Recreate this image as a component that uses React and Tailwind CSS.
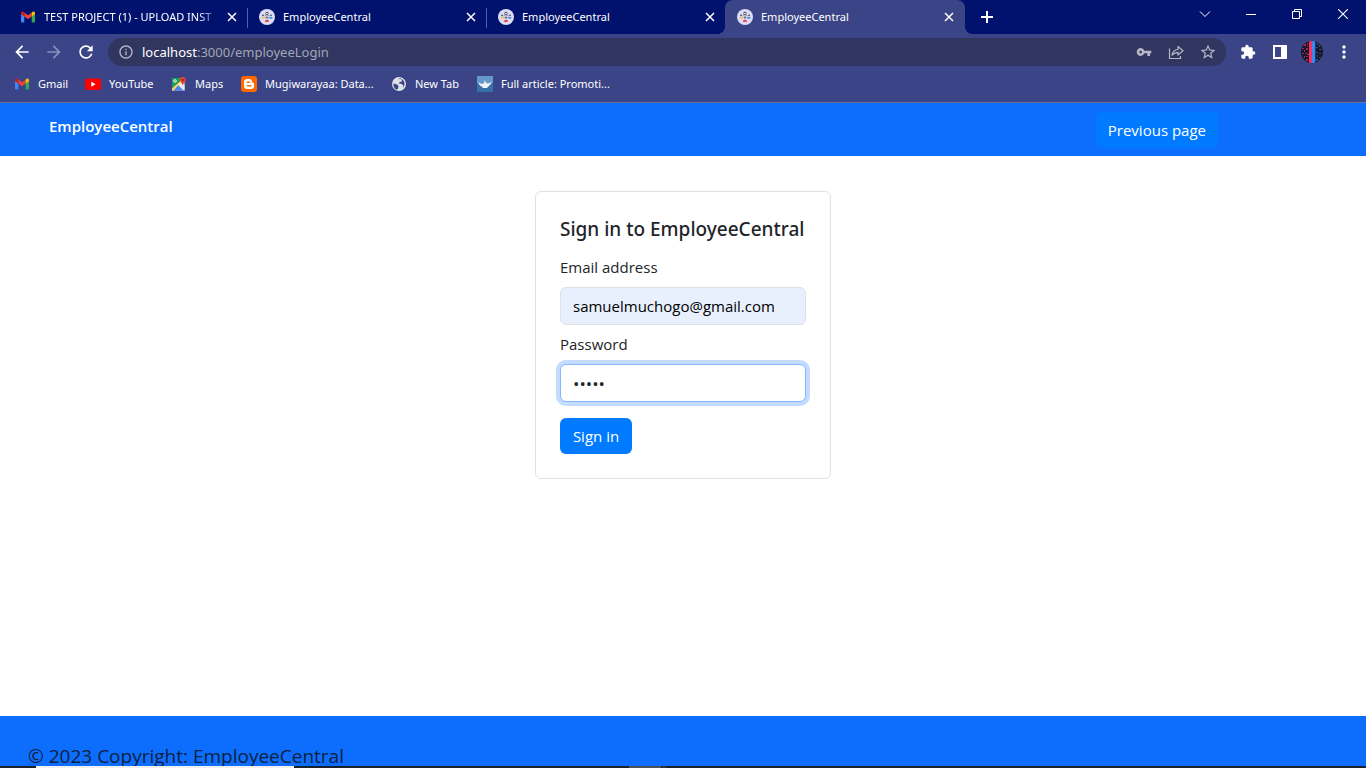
import React from "react";
import {
  MdArrowBack,
  MdArrowForward,
  MdRefresh,
  MdInfoOutline,
  MdVpnKey,
  MdStarBorder,
  MdExtension,
  MdMoreVert,
} from "react-icons/md";

function GmailIcon() {
  return (
    <svg viewBox="0 0 16 16" className="size-4 shrink-0" aria-hidden="true">
      <path d="M1 4.500 4.300 7v6.500H2a1 1 0 0 1-1-1z" fill="#4285f4" />
      <path d="M15 4.500 11.700 7v6.500H14a1 1 0 0 0 1-1z" fill="#34a853" />
      <path d="M4.300 3.500 8 6.300l3.700-2.800v4L8 10.300 4.300 7.500z" fill="#ea4335" />
      <path d="M1 4.300c0-1.800 1.800-2.300 3.300-.9v4.100L1 5.200z" fill="#c5221f" />
      <path d="M15 4.300c0-1.800-1.800-2.300-3.300-.9v4.100L15 5.200z" fill="#fbbc04" />
    </svg>
  );
}

function PeopleIcon() {
  return (
    <svg viewBox="0 0 16 16" className="size-4 shrink-0" aria-hidden="true">
      <circle cx="8" cy="8" r="8" fill="#dcdcf6" />
      <circle cx="8" cy="4.500" r="1.300" fill="#fff" stroke="#454a5c" strokeWidth="1" />
      <circle cx="4" cy="6.300" r=".9" fill="#454a5c" />
      <circle cx="12" cy="6.300" r=".9" fill="#454a5c" />
      <path d="M5.500 7 6.700 6.300M10.500 7 9.300 6.300M8 6.500V10M6.500 8.500h3" stroke="#6a6f80" strokeWidth=".9" />
      <path d="M2.700 8h3v1.800h-3z" fill="#f5c069" />
      <path d="M10.300 8h3v1.800h-3z" fill="#4793d8" />
      <path d="M6.700 10.800h2.600l.9 2.200H5.800z" fill="#e84c4c" />
    </svg>
  );
}

function YouTubeIcon() {
  return (
    <svg viewBox="0 0 16 16" className="size-4 shrink-0" aria-hidden="true">
      <rect x="0" y="2.500" width="16" height="11.500" rx="2.500" fill="#f00" />
      <path d="M6.300 5.800v5l4.300-2.500z" fill="#fff" />
    </svg>
  );
}

function MapsIcon() {
  return (
    <svg viewBox="0 0 16 16" className="size-4 shrink-0" aria-hidden="true">
      <path d="M1 2h12.500v12.500H1z" fill="#e8eaed" />
      <path d="M1 2h9l-1 5-8 7.500z" fill="#1e9e58" />
      <path d="M1 12.500 11 3.500l1.500 1.500L3 14.500H1z" fill="#fdd663" />
      <path d="m7.500 8.500 3-2.500 3 3v5.500z" fill="#e8eaed" />
      <path d="M2.500 14.500 7.300 9.300l5.200 5.200z" fill="#4285f4" />
      <circle cx="4" cy="5" r="1.300" fill="none" stroke="#fff" strokeWidth=".9" />
      <path d="M11.800 1a2.900 2.900 0 0 0-2.900 2.900c0 2.300 2.300 2.800 2.900 5.600.6-2.800 2.900-3.300 2.900-5.600A2.900 2.900 0 0 0 11.800 1z" fill="#ea4335" />
      <circle cx="11.800" cy="3.900" r="1" fill="#8c1d18" />
    </svg>
  );
}

function BloggerIcon() {
  return (
    <svg viewBox="0 0 16 16" className="size-4 shrink-0" aria-hidden="true">
      <rect width="16" height="16" rx="3" fill="#ff6a00" />
      <path d="M6 3h2.500A2.600 2.600 0 0 1 11 5.600c0 1 .4 1.100 1.200 1.200.5 0 .8.300.8.800V10a3 3 0 0 1-3 3H6a3 3 0 0 1-3-3V6a3 3 0 0 1 3-3z" fill="#fff" />
      <path d="M6.300 6.200h2M6.300 9.800h3.500" stroke="#ff6a00" strokeWidth="1.400" strokeLinecap="round" />
    </svg>
  );
}

function GlobeIcon() {
  return (
    <svg viewBox="0 0 16 16" className="size-4 shrink-0" aria-hidden="true">
      <circle cx="8" cy="8" r="7" fill="#dfe1e8" />
      <path d="M2.500 7.500 6 8.500l1.500 1.500-.5 2.500-1 1.300C3.500 13 2.200 10.500 2.500 7.500zM7 3.500l2-.8 2 1-.5 2L8.500 6 8 7.500 11 8l1.500 2-1 2c2-1.500 2.500-4.500 1.500-6.500l-1.500-2L9 2z" fill="#3b4487" />
    </svg>
  );
}

function LampIcon() {
  return (
    <svg viewBox="0 0 16 16" className="size-4 shrink-0" aria-hidden="true">
      <path d="M0 0h16v16H0z" fill="#3670a8" />
      <path d="M0 0h16v7H0z" fill="#6299c8" />
      <path d="M1 6.500 4 7.500h2.500L7.500 6V4.800h1V6l1.200 1.300h2.300c.8-1.200 2.500-1 3-.2-1.500.2-2 3.500-5 4l1 .9H5l1-.9C3.500 10.500 2 8.800 1 6.500z" fill="#edf3f8" />
    </svg>
  );
}

function CloseIcon() {
  return (
    <svg viewBox="0 0 16 16" className="size-4" fill="none" stroke="#fff" strokeWidth="1.500" aria-hidden="true">
      <path d="m4 4 8 8M12 4l-8 8" />
    </svg>
  );
}

function ShareIcon() {
  return (
    <svg viewBox="0 0 16 16" className="size-4" fill="none" stroke="#b5b7c6" strokeWidth="1.200" aria-hidden="true">
      <path d="M1.500 4.500v10h11V12" />
      <path d="M4 11c.5-3.500 2.500-5.300 6-5.500V2.500l5 4.300-5 4.200V8.300C7.500 8.300 5.700 9.200 4 11z" strokeLinejoin="round" />
    </svg>
  );
}

function Avatar() {
  return (
    <svg viewBox="0 0 22 22" className="size-[22px]" aria-hidden="true">
      <defs>
        <clipPath id="avatar-clip">
          <circle cx="11" cy="11" r="11" />
        </clipPath>
      </defs>
      <g clipPath="url(#avatar-clip)">
        <path d="M0 0h22v22H0z" fill="#17182b" />
        <path d="M8 0h3v22H8z" fill="#f5316a" />
        <path d="M11 0h3.300v22H11z" fill="#3a86f5" />
        <path d="M3 3h2v2H3zM1 7h2v1H1zM5 7h2v2H5zM3 9h1v2H3zM1 12h2v1H1zM4 12h2v1H4zM3 15h1v2H3zM5 15h2v1H5zM5 18h2v2H5zM6 2h1v2H6zM6 5h1v1H6z" fill="#a3264f" />
        <path d="M16 2h1v2h-1zM18 4h1v2h-1zM15 6h2v1h-2zM18 8h3v1h-3zM15 11h2v1h-2zM18 12h2v1h-2zM16 14h1v2h-1zM18 16h2v1h-2zM15 18h2v2h-2z" fill="#294f8d" />
        <path d="M6 12.500c0 3 5 1 11-3-5 3-8.500 4.500-9.300 3.500z" fill="#d63a86" />
      </g>
    </svg>
  );
}

function Tab({ icon, title, active = false, fade = false, divider = false }) {
  return (
    <div
      className={
        active
          ? "relative flex h-full w-[240px] items-center rounded-t-lg bg-[#3b4487] pl-3 pr-2"
          : "relative flex h-full w-[239px] items-center pl-3 pr-[7px]"
      }
    >
      {active && (
        <>
          <span className="absolute bottom-0 -left-2 size-2 bg-[radial-gradient(circle_at_top_left,#00126e_8px,#3b4487_8px)]" />
          <span className="absolute bottom-0 -right-2 size-2 bg-[radial-gradient(circle_at_top_right,#00126e_8px,#3b4487_8px)]" />
        </>
      )}
      {icon}
      <span
        className={
          fade
            ? "ml-2 min-w-0 flex-1 overflow-hidden whitespace-nowrap [mask-image:linear-gradient(to_right,black_88%,transparent)]"
            : "ml-2 min-w-0 flex-1 overflow-hidden whitespace-nowrap"
        }
      >
        {title}
      </span>
      <button type="button" aria-label="Close tab" className="ml-1">
        <CloseIcon />
      </button>
      {divider && <span className="absolute -right-px top-2 h-5 w-px bg-[#5460a0]" />}
    </div>
  );
}

function Bookmark({ icon, label, width }) {
  return (
    <a href="#" className={`flex items-center gap-2 whitespace-nowrap ${width}`}>
      {icon}
      {label}
    </a>
  );
}

const toolButton = "flex size-8 items-center justify-center";
const windowButton = "flex h-7 w-[46px] items-center justify-center";

function Browser() {
  return (
    <header className="shrink-0 border-b border-[#6871a3] bg-[#3b4487] font-['Noto_Sans','Open_Sans',sans-serif] text-[11px] text-white">
      <div className="flex h-[34px] items-start bg-[#00126e] pl-2">
        <Tab icon={<GmailIcon />} title="TEST PROJECT (1) - UPLOAD INST" fade divider />
        <Tab icon={<PeopleIcon />} title="EmployeeCentral" divider />
        <Tab icon={<PeopleIcon />} title="EmployeeCentral" />
        <Tab icon={<PeopleIcon />} title="EmployeeCentral" active />
        <button type="button" aria-label="New tab" className="ml-[14px] flex h-full items-center">
          <svg viewBox="0 0 16 16" className="size-4" stroke="#fff" strokeWidth="2" aria-hidden="true">
            <path d="M8 2v12M2 8h12" />
          </svg>
        </button>
        <div className="ml-auto flex">
          <button type="button" aria-label="Search tabs" className={windowButton}>
            <svg viewBox="0 0 12 12" className="size-3" fill="none" stroke="#fff" aria-hidden="true">
              <path d="m1 3.500 5 5 5-5" />
            </svg>
          </button>
          <button type="button" aria-label="Minimize" className={windowButton}>
            <svg viewBox="0 0 10 10" className="size-[10px]" fill="none" stroke="#fff" aria-hidden="true">
              <path d="M0 5.500h10" />
            </svg>
          </button>
          <button type="button" aria-label="Restore" className={windowButton}>
            <svg viewBox="0 0 10 10" className="size-[10px]" fill="none" stroke="#fff" aria-hidden="true">
              <path d="M.5 2.500h7v7h-7zM2.500 2.500v-2h7v7h-2" />
            </svg>
          </button>
          <button type="button" aria-label="Close window" className={windowButton}>
            <svg viewBox="0 0 10 10" className="size-[10px]" fill="none" stroke="#fff" strokeWidth="1.100" aria-hidden="true">
              <path d="m0 0 10 10M10 0 0 10" />
            </svg>
          </button>
        </div>
      </div>

      <div className="flex h-9 items-center px-[6px]">
        <button type="button" aria-label="Back" className={toolButton}>
          <MdArrowBack size={20} />
        </button>
        <button type="button" aria-label="Forward" className={`${toolButton} text-[#8b91bd]`}>
          <MdArrowForward size={20} />
        </button>
        <button type="button" aria-label="Reload" className={toolButton}>
          <MdRefresh size={20} />
        </button>
        <div className="mx-[6px] flex h-7 flex-1 items-center rounded-full bg-[#30365f] pl-[10px] pr-[2px] text-[13px] text-[#b5b7c6]">
          <MdInfoOutline size={16} className="mr-2 shrink-0" />
          <span className="flex-1 text-[#a2a5b8]">
            <span className="text-white">localhost</span>:3000/employeeLogin
          </span>
          <button type="button" aria-label="Saved passwords" className={toolButton}>
            <MdVpnKey size={16} />
          </button>
          <button type="button" aria-label="Share" className={toolButton}>
            <ShareIcon />
          </button>
          <button type="button" aria-label="Bookmark this page" className={toolButton}>
            <MdStarBorder size={18} />
          </button>
        </div>
        <button type="button" aria-label="Extensions" className={toolButton}>
          <MdExtension size={16} />
        </button>
        <button type="button" aria-label="Side panel" className={toolButton}>
          <svg viewBox="0 0 14 14" className="size-[14px]" aria-hidden="true">
            <path d="M1 1h8v12H1z" fill="none" stroke="#fff" strokeWidth="2" />
            <path d="M9 0h5v14H9z" fill="#fff" />
          </svg>
        </button>
        <button type="button" aria-label="Profile" className={toolButton}>
          <Avatar />
        </button>
        <button type="button" aria-label="Menu" className={toolButton}>
          <MdMoreVert size={20} />
        </button>
      </div>

      <nav aria-label="Bookmarks" className="flex h-8 items-start px-[14px] pt-[2px]">
        <Bookmark icon={<GmailIcon />} label="Gmail" width="w-[71px]" />
        <Bookmark icon={<YouTubeIcon />} label="YouTube" width="w-[86px]" />
        <Bookmark icon={<MapsIcon />} label="Maps" width="w-[70px]" />
        <Bookmark icon={<BloggerIcon />} label="Mugiwarayaa: Data..." width="w-[150px]" />
        <Bookmark icon={<GlobeIcon />} label="New Tab" width="w-[86px]" />
        <Bookmark icon={<LampIcon />} label="Full article: Promoti..." width="w-[150px]" />
      </nav>
    </header>
  );
}

const fieldClass = "block h-[38px] w-full rounded-md border px-3 outline-none";

export default function App() {
  return (
    <div className="flex h-screen flex-col overflow-hidden bg-white font-['Open_Sans','Noto_Sans',sans-serif] text-[15px] leading-6 text-[#212529]">
      <Browser />

      <nav className="flex h-[53px] shrink-0 items-start justify-between bg-[#0d6efd] pl-[49px] pr-[148px]">
        <a href="#" className="pt-[11px] font-semibold text-white">
          EmployeeCentral
        </a>
        <button type="button" className="mt-[9px] h-9 rounded-md bg-[#007bff] px-3 text-white">
          Previous page
        </button>
      </nav>

      <main className="flex flex-1 items-start justify-center pt-[35px]">
        <form className="w-[296px] rounded-md border border-[#dee2e6] p-6" onSubmit={(e) => e.preventDefault()}>
          <h1 className="mb-[13px] whitespace-nowrap font-['Noto_Sans','Open_Sans',sans-serif] text-[19px] leading-[26px] font-medium">
            Sign in to EmployeeCentral
          </h1>
          <label htmlFor="email" className="mb-2 block">
            Email address
          </label>
          <input
            id="email"
            type="email"
            defaultValue="samuelmuchogo@gmail.com"
            className={`${fieldClass} mb-[7px] border-[#dee2e6] bg-[#e8f0fe] text-black`}
          />
          <label htmlFor="password" className="mb-2 block">
            Password
          </label>
          <input
            id="password"
            type="password"
            defaultValue="12345"
            className={`${fieldClass} mb-4 border-[#86b7fe] bg-white text-[17px] shadow-[0_0_0_4px_#c2dbff]`}
          />
          <button type="submit" className="h-9 min-w-[72px] rounded-md bg-[#007bff] px-3 text-white">
            Sign in
          </button>
        </form>
      </main>

      <footer className="h-[50px] shrink-0 overflow-hidden bg-[#0d6efd] pl-7 pt-7 text-[19px] text-[#0a1f42]">
        © 2023 Copyright: EmployeeCentral
      </footer>
      <div className="flex h-[2px] shrink-0 bg-[#1a2230]">
        <span className="ml-9 w-[258px] bg-[#f0f0f0]" />
        <span className="ml-[335px] w-8 bg-[#4c525c]" />
        <span className="ml-px w-1 bg-[#333a46]" />
      </div>
    </div>
  );
}
